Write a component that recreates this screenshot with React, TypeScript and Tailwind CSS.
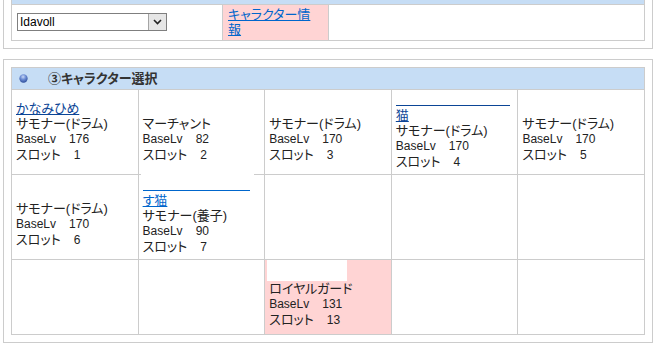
import React from "react";

type Char = {
  name?: string;
  blank?: number; // width of the unrendered first line of a wrapped name
  visited?: boolean;
  job: string;
  lv: number;
  slot: number;
  pink?: boolean;
  image?: boolean;
  cover?: boolean;
};

const rows: (Char | null)[][] = [
  [
    { name: "かなみひめ", visited: true, job: "サモナー(ドラム)", lv: 176, slot: 1 },
    { job: "マーチャント", lv: 82, slot: 2 },
    { job: "サモナー(ドラム)", lv: 170, slot: 3 },
    { name: "猫", blank: 114, visited: true, job: "サモナー(ドラム)", lv: 170, slot: 4 },
    { job: "サモナー(ドラム)", lv: 170, slot: 5 },
  ],
  [
    { job: "サモナー(ドラム)", lv: 170, slot: 6 },
    { name: "す猫", blank: 107, job: "サモナー(養子)", lv: 90, slot: 7, cover: true },
    null,
    null,
    null,
  ],
  [
    null,
    null,
    { job: "ロイヤルガード", lv: 131, slot: 13, pink: true, image: true },
    null,
    null,
  ],
];

const font =
  "font-['Liberation_Sans','Noto_Sans_CJK_JP',sans-serif] [font-feature-settings:'palt']";

const CharCell: React.FC<{ c: Char | null; h: string }> = ({ c, h }) => {
  if (!c) {
    return <td className={`border border-[#cccccc] p-0 ${h}`} />;
  }
  const linkColor = c.visited ? "text-[#0b4596]" : "text-[#0066cc]";
  return (
    <td
      className={`relative border border-[#cccccc] px-[4px] py-0 align-middle ${h} ${
        c.pink ? "bg-[#ffd4d4]" : ""
      }`}
    >
      {c.cover && (
        <div className="absolute -top-[2px] left-[2px] h-[4px] w-[113px] bg-white" />
      )}
      <div className={c.image ? "-mt-[6px]" : ""}>
        {c.image ? (
          <div className="-ml-[2px] h-[21px] w-[80px] bg-white" />
        ) : (
          <div className="h-[15px]">
            {c.blank && (
              <div
                className={`h-[13px] border-b ${
                  c.visited ? "border-[#0b4596]" : "border-[#0066cc]"
                }`}
                style={{ width: c.blank }}
              />
            )}
            {!c.blank && c.name && (
              <a href="#" className={`underline ${linkColor}`}>
                {c.name}
              </a>
            )}
          </div>
        )}
        {c.blank && c.name && (
          <div className="h-[15px]">
            <a href="#" className={`underline ${linkColor}`}>
              {c.name}
            </a>
          </div>
        )}
        <div>{c.job}</div>
        <div>
          <span className="text-[12px]">BaseLv</span>
          {"\u3000"}
          <span className="text-[12px]">{c.lv}</span>
        </div>
        <div>
          スロット{"\u3000"}
          <span className="text-[12px]">{c.slot}</span>
        </div>
      </div>
    </td>
  );
};

export default function App() {
  return (
    <div className={`bg-white text-[13px] leading-[15px] text-[#222222] ${font}`}>
      {/* サーバー選択 */}
      <div className="ml-[3px] w-[650px] border border-t-0 border-[#cccccc] px-[7px] pb-[7px]">
        <table className="w-full table-fixed border-collapse">
          <colgroup>
            <col className="w-[211px]" />
            <col className="w-[106px]" />
            <col />
          </colgroup>
          <tbody>
            <tr>
              <td
                colSpan={3}
                className="h-[4px] border-x border-b border-[#cccccc] bg-[#c6ddf5] p-0"
              />
            </tr>
            <tr>
              <td className="h-[36px] border border-[#cccccc] px-[5px] py-0 align-middle">
                <div className="flex h-[18px] w-[150px] items-stretch border border-[#7f7f7f] bg-white">
                  <span className="flex-1 pl-[2px] text-[12px] leading-[16px] text-black">
                    Idavoll
                  </span>
                  <span className="flex w-[18px] items-center justify-center border-l border-[#a5a5a5] bg-[#e6e6e6]">
                    <svg width="9" height="6" viewBox="0 0 9 6">
                      <path d="M1 1 L4.5 4.5 L8 1" fill="none" stroke="#222" strokeWidth="1.6" />
                    </svg>
                  </span>
                </div>
              </td>
              <td className="border border-[#cccccc] bg-[#ffd4d4] px-[5px] py-0 align-middle">
                <a href="#" className="text-[#0066cc] underline">
                  キャラクター情
                  <br />報
                </a>
              </td>
              <td className="border border-[#cccccc] p-0" />
            </tr>
          </tbody>
        </table>
      </div>

      {/* ③キャラクター選択 */}
      <div className="ml-[3px] mt-[10px] w-[650px] border border-[#cccccc] px-[7px] py-[7px]">
        <table className="w-full table-fixed border-collapse">
          <tbody>
            <tr>
              <td
                colSpan={5}
                className="h-[22px] border border-[#cccccc] bg-[#c6ddf5] px-0 py-0 align-middle"
              >
                <div className="flex items-center">
                  <svg width="9" height="9" viewBox="0 0 10 10" className="ml-[7px]">
                    <defs>
                      <radialGradient id="ball" cx="0.45" cy="0.3" r="0.7">
                        <stop offset="0" stopColor="#c9d8f5" />
                        <stop offset="0.45" stopColor="#6f8fd6" />
                        <stop offset="1" stopColor="#2f4f9c" />
                      </radialGradient>
                    </defs>
                    <circle cx="5" cy="5" r="4.6" fill="url(#ball)" />
                  </svg>
                  <span className="ml-[20px] font-bold text-[#333333]">③キャラクター選択</span>
                </div>
              </td>
            </tr>
            {rows.map((row, i) => (
              <tr key={i}>
                {row.map((c, j) => (
                  <CharCell key={j} c={c} h={i === 2 ? "h-[75px]" : "h-[85px]"} />
                ))}
              </tr>
            ))}
          </tbody>
        </table>
      </div>
    </div>
  );
}
